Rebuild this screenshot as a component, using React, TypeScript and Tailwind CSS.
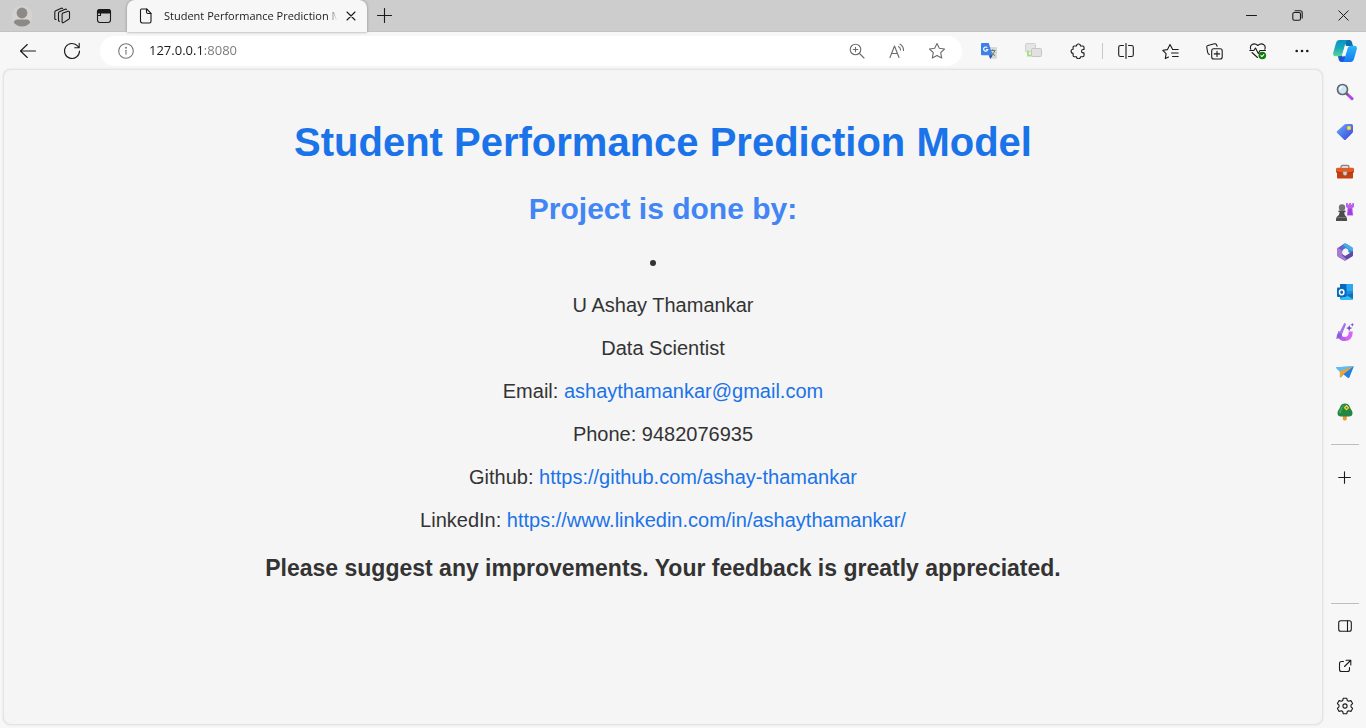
import React from 'react';

type IconProps = { children: React.ReactNode; size?: number; className?: string; stroke?: string };

function Line({ children, size = 18, className = '', stroke = '#1b1b1b' }: IconProps) {
  return (
    <svg
      width={size}
      height={size}
      viewBox={`0 0 ${size} ${size}`}
      fill="none"
      stroke={stroke}
      strokeWidth="1.1"
      strokeLinecap="round"
      strokeLinejoin="round"
      className={`shrink-0 ${className}`}
      aria-hidden="true"
    >
      {children}
    </svg>
  );
}

function IconButton({ label, className, children }: { label: string; className: string; children: React.ReactNode }) {
  return (
    <button type="button" aria-label={label} className={`flex shrink-0 items-center justify-center ${className}`}>
      {children}
    </button>
  );
}

function TabStrip() {
  return (
    <header className="flex h-8 items-stretch border-b border-[#c3c3c3] bg-[#cdcdcd]">
      <IconButton label="Profile" className="ml-0.5 w-10">
        <svg width="22" height="22" viewBox="0 0 22 22" aria-hidden="true">
          <circle cx="11" cy="11" r="10.5" fill="#d5d3d0" />
          <circle cx="11" cy="8" r="5.4" fill="#8d8986" />
          <path d="M2.800 17.800c.4-2.300 1.600-3.300 3.600-3.300h9.200c2 0 3.200 1 3.600 3.300-2 2.300-4.900 3.700-8.200 3.700s-6.200-1.400-8.200-3.700z" fill="#8d8986" />
        </svg>
      </IconButton>
      <IconButton label="Workspaces" className="w-10">
        <Line>
          <path d="M9.500 6.300 15 4.300q1.500-.4 1.500 1v5.800q0 .8-.8 1.200l-5.200 3.300q-1.400.7-1.400-.8V7.500q0-.9.400-1.200z" />
          <path d="M6.500 14.200q-1 .1-1-1V6.200q0-1 .9-1.400L12.200 2.200q1-.3 1.300.4" />
          <path d="M3 12.500q-1.200.1-1.200-1V5.200q0-1 .9-1.400L8.300 1.200q1-.3 1.300.4" />
        </Line>
      </IconButton>
      <IconButton label="Tab actions" className="w-11">
        <Line size={16}>
          <rect x="1.500" y="1.500" width="13" height="13" rx="2.500" />
          <path d="M1.500 4q0-2.500 2.500-2.500h8q2.500 0 2.500 2.500v1h-13z" fill="#1b1b1b" />
          <path d="M4.500 5v2.500h-3" />
        </Line>
      </IconButton>
      <div className="-mb-px ml-px flex w-60 items-center rounded-t-lg bg-[#f7f7f7] pr-2 pl-[11px] shadow-[0_0_3px_#888888]">
        <Line size={16}>
          <path d="M3.500 1h5.200l4.300 4.300v8.200q0 1.500-1.500 1.500h-7Q3 15 2.500 13.500v-11Q2.500 1 3.500 1z" />
          <path d="M8.500 1v3q0 1.500 1.500 1.500h3" />
        </Line>
        <span className="ml-2.5 min-w-0 flex-1 overflow-hidden mask-r-from-95% font-['Open_Sans',sans-serif] text-[11px] whitespace-nowrap text-[#1b1b1b]">
          Student Performance Prediction Model
        </span>
        <IconButton label="Close tab" className="ml-1.5 size-4">
          <Line size={10}>
            <path d="m1 1 8 8M9 1 1 9" />
          </Line>
        </IconButton>
      </div>
      <IconButton label="New tab" className="w-[35px]">
        <Line size={15}>
          <path d="M7.500.5v14M.5 7.500h14" />
        </Line>
      </IconButton>
      <div className="flex-1" />
      <IconButton label="Minimize" className="w-[46px]">
        <Line size={11}>
          <path d="M.5 5.500h10" strokeWidth="1" />
        </Line>
      </IconButton>
      <IconButton label="Restore" className="w-[46px]">
        <Line size={11}>
          <rect x=".8" y="2.500" width="7.700" height="7.700" rx="1.500" />
          <path d="M3 .8h5.200q2 0 2 2V8" />
        </Line>
      </IconButton>
      <IconButton label="Close window" className="w-[46px]">
        <Line size={11}>
          <path d="m.8.8 9.400 9.400M10.200.8.8 10.200" strokeWidth="1" />
        </Line>
      </IconButton>
    </header>
  );
}

function AddressBar() {
  return (
    <div className="ml-1.5 flex h-[30px] min-w-0 flex-1 items-center rounded-full bg-white pr-[5px] pl-[18px]">
      <Line size={16} stroke="#767676">
        <circle cx="8" cy="8" r="7.300" />
        <path d="M8 7.300v4" />
        <circle cx="8" cy="4.700" r=".4" fill="#767676" />
      </Line>
      <input
        type="text"
        aria-label="Address"
        defaultValue="127.0.0.1:8080"
        className="ml-[15px] min-w-0 flex-1 bg-linear-to-r from-[#1b1b1b] from-[54px] to-[#767676] to-[54px] bg-clip-text font-['Open_Sans',sans-serif] text-[13px] text-transparent caret-black outline-none"
      />
      <IconButton label="Zoom" className="w-10">
        <Line size={16} stroke="#6b6b6b">
          <circle cx="6.500" cy="6.500" r="5.300" />
          <path d="m10.500 10.500 4.500 4.500M6.500 4.200v4.600M4.200 6.500h4.600" />
        </Line>
      </IconButton>
      <IconButton label="Read aloud" className="w-10">
        <Line size={16} stroke="#6b6b6b">
          <path d="M1 14.500 5.500 3l4.500 11.500M2.600 10.500h5.800" />
          <path d="M9.500 3.500q2 1.200 2 3.500M11 1.200q3.800 2.200 3.500 6.300" />
        </Line>
      </IconButton>
      <IconButton label="Favorite" className="w-10">
        <Line stroke="#6b6b6b">
          <path d="m9 1.500 2.300 4.800 5.200.7-3.800 3.700 1 5.300L9 13.500 4.300 16l1-5.300L1.500 7l5.200-.7z" />
        </Line>
      </IconButton>
    </div>
  );
}

function Toolbar() {
  return (
    <nav aria-label="Browser toolbar" className="flex items-center pt-1 pb-[3px] pl-1.5">
      <IconButton label="Back" className="h-[30px] w-11">
        <Line>
          <path d="M16.500 9h-15M8.300 2.500 1.500 9l6.800 6.500" />
        </Line>
      </IconButton>
      <IconButton label="Refresh" className="h-[30px] w-11">
        <Line>
          <path d="M16.500 9A7.500 7.500 0 1 1 14.800 4.200L16 5.500M16.200 1.200v4.500h-4.500" />
        </Line>
      </IconButton>
      <AddressBar />
      <IconButton label="Translate" className="ml-[5px] h-[30px] w-11">
        <svg width="16" height="16" viewBox="0 0 16 16" aria-hidden="true">
          <path d="M6 4h9.200q.8 0 .8.800V15q0 .8-.8.800H9z" fill="#d8d8d8" />
          <path d="M9 7.500h5.500M11.700 6.300v1.200M13.800 7.500c-.6 2.300-2 4-4 5.200M10 8.500c.9 1.800 2.200 3.200 4 4.200" stroke="#607d78" fill="none" />
          <path d="M1 0h6.800l3.500 12.200H1q-1 0-1-1V1q0-1 1-1z" fill="#3d80e8" />
          <path d="m7.800 12.200 1.500 3.800 2.500-3.800z" fill="#234fac" />
          <path d="M6.300 4.700A2.100 2.100 0 1 0 6.800 6.500H4.900" stroke="#fff" strokeWidth="1.200" fill="none" />
        </svg>
      </IconButton>
      <IconButton label="Tab screens" className="h-[30px] w-[45px]">
        <svg width="17" height="16" viewBox="0 0 17 16" aria-hidden="true">
          <rect x=".5" y=".5" width="10" height="8.500" rx="1.200" fill="#e5e5e5" stroke="#cfcfcf" />
          <path d="M3 7.500v5h3.500" stroke="#9be572" strokeWidth="1.800" fill="none" />
          <rect x="6.500" y="5.500" width="10" height="8" rx="1" fill="#e1e1e1" stroke="#c5c5c5" />
        </svg>
      </IconButton>
      <IconButton label="Extensions" className="h-[30px] w-11">
        <Line size={16}>
          <path d="M4.300 3h2.200a2 2 0 0 1 4 0h2.300q1.200 0 1.200 1.200v2.300h-.8a1.700 1.700 0 0 0 0 3.400h.8v2.600q0 1.200-1.200 1.200h-2.300a2 2 0 0 1-4 0H4.300q-1.200 0-1.200-1.200v-2.300a2 2 0 0 1 0-4V4.200Q3.100 3 4.300 3z" />
        </Line>
      </IconButton>
      <span className="flex h-4 w-1 justify-center">
        <span className="w-px bg-[#c8c8c8]" />
      </span>
      <IconButton label="Split screen" className="h-[30px] w-11">
        <Line size={16}>
          <path d="M5.500 2.500h-3Q.7 2.500.7 4.300v7.400q0 1.800 1.800 1.800h3M10.500 2.500h3q1.800 0 1.800 1.800v7.400q0 1.800-1.800 1.800h-3M8 .5v15" />
        </Line>
      </IconButton>
      <IconButton label="Favorites" className="h-[30px] w-11">
        <Line size={17}>
          <path d="m6.500 14-3.200 1.600.8-4.900L.8 7.300l4.700-.7L8 1.500l2.300 4.300M10.500 6.500h5.700M9.500 10h6.700M10.500 13.500h5.700" />
        </Line>
      </IconButton>
      <IconButton label="Collections" className="h-[30px] w-11">
        <Line size={17}>
          <rect x="5.700" y="5.700" width="10.500" height="10.300" rx="2" />
          <path d="M11 8.200v5.300M8.300 10.900h5.300M3.500 11.500Q2 11.300 1.700 9.500L.8 4.500q-.3-1.600 1.200-2L8.500.8q1.500-.3 2 1l.6 1.500" />
        </Line>
      </IconButton>
      <IconButton label="Browser essentials" className="h-[30px] w-11">
        <Line>
          <path d="M1.800 7.200C.2 3.500 4.500-.2 8.800 3.500c4.300-3.700 8.600 0 7 3.700M3 10.500l5.500 5M.8 8.500h4L6.500 6l2.800 5.500L11 8.500h5.500" />
          <circle cx="13.300" cy="13.500" r="3.800" fill="#107c10" stroke="none" />
          <path d="m11.900 13.600 1 1 1.900-2" stroke="#fff" />
        </Line>
      </IconButton>
      <IconButton label="Settings and more" className="h-[30px] w-11">
        <svg width="14" height="4" viewBox="0 0 14 4" fill="#1b1b1b" aria-hidden="true">
          <circle cx="1.700" cy="2" r="1.300" />
          <circle cx="7" cy="2" r="1.300" />
          <circle cx="12.300" cy="2" r="1.300" />
        </svg>
      </IconButton>
      <IconButton label="Copilot" className="h-[30px] w-[42px]">
        <svg width="24" height="22" viewBox="0 0 24 22" aria-hidden="true">
          <defs>
            <linearGradient id="cp-left" x1="0" y1="0" x2="0" y2="1">
              <stop stopColor="#0a93c4" />
              <stop offset=".5" stopColor="#18a9bd" />
              <stop offset="1" stopColor="#5ad88e" />
            </linearGradient>
            <linearGradient id="cp-right" x1="0" y1="0" x2="0" y2="1">
              <stop stopColor="#2bb9f5" />
              <stop offset="1" stopColor="#1478f5" />
            </linearGradient>
          </defs>
          <path d="M11 0h5.500q1.800 0 2.400 2l1.100 4h-7z" fill="#0b6fae" />
          <path d="M13 22H8.500q-2 0-2.600-2L4.700 15.500H12z" fill="#1855d8" />
          <path d="M6.500 0H15q-1.800.5-2.500 3l-3 10.500q-.8 2.800-3.500 2.800H2.500Q-.5 16.300.3 12.500L3 3q.9-3 3.500-3z" fill="url(#cp-left)" />
          <path d="M17.500 22H9q1.800-.5 2.500-3l3-10.500q.8-2.800 3.500-2.800h3.500q3 0 2.200 3.800L21 19q-.9 3-3.500 3z" fill="url(#cp-right)" />
          <path d="m12.200 6 2.800-.1-3.200 10.400-2.800.1z" fill="#f7f7f7" />
        </svg>
      </IconButton>
    </nav>
  );
}

function Art({ children }: { children: React.ReactNode }) {
  return (
    <svg width="18" height="18" viewBox="0 0 18 18" aria-hidden="true">
      {children}
    </svg>
  );
}

function Sidebar() {
  return (
    <aside aria-label="Sidebar" className="flex w-[43px] shrink-0 flex-col items-center pt-[3px]">
      <IconButton label="Search" className="h-10 w-10">
        <Art>
          <path d="m11 11 5 4.700" stroke="#b246ee" strokeWidth="3" strokeLinecap="round" />
          <path d="m10 10 2 2" stroke="#666" strokeWidth="2" />
          <circle cx="6.500" cy="6.500" r="5" fill="#cce9fc" stroke="#666" strokeWidth="1.700" />
          <path d="M3.700 6.500q.2-2.600 2.800-3" stroke="#fff" strokeWidth="1.200" fill="none" />
        </Art>
      </IconButton>
      <IconButton label="Shopping" className="h-10 w-10">
        <svg width="18" height="18" viewBox="0 0 18 18" aria-hidden="true">
          <defs>
            <linearGradient id="tag" x1="0" y1="0" x2="1" y2="1">
              <stop stopColor="#66b0ff" />
              <stop offset="1" stopColor="#393fd8" />
            </linearGradient>
          </defs>
          <path d="M8.500 1.500q.7-.6 1.500-.6l5.500.2q1.500.1 1.500 1.600v5.800q0 .8-.6 1.400l-6.500 6.700q-1 1-2 0L1.200 10q-1-1 0-2z" fill="url(#tag)" />
          <circle cx="13" cy="5" r="1.500" fill="#fff" stroke="#f4c430" strokeWidth="1.500" />
        </svg>
      </IconButton>
      <IconButton label="Tools" className="h-10 w-10">
        <Art>
          <path d="M5 5V4q0-1.500 1.500-1.500h5Q13 2.500 13 4v1" stroke="#858585" strokeWidth="1.300" fill="none" />
          <path d="M1 14.800V9h16v5.800q0 .8-.8.800H1.800q-.8 0-.8-.800z" fill="#c6400f" />
          <path d="M0 6Q0 4.800 1.500 4.800h15Q18 4.800 18 6v3q-3 1.200-9 1.200T0 9z" fill="#e35b25" />
          <path d="M0 8.800Q3 10 9 10t9-1.200" stroke="#a9300c" fill="none" />
          <path d="M7 8.500h4v2.200Q11 12.500 9 12.500t-2-1.800z" fill="#d2d2d2" stroke="#888" strokeWidth=".6" />
        </Art>
      </IconButton>
      <IconButton label="Games" className="h-10 w-10">
        <Art>
          <path d="M10 0h1.800v1.500h1.400V0h1.800v1.500h1.300V0H18v4l-1.600 1 .7 7.500H11L11.600 5 10 4z" fill="#bb61ef" />
          <path d="M12.500 5.500h3l.8 6.500h-4.600z" fill="#a23ee0" />
          <circle cx="6" cy="4.500" r="3.200" fill="#747474" />
          <path d="M2.500 7.500h7v1.800H8.200q0 3 2.300 4.700l.5 2v2H0v-2l.7-2Q3.500 12.300 3.800 9.300H2.500z" fill="#4c4c4c" />
          <path d="M1.500 14.500h8.500" stroke="#777" />
        </Art>
      </IconButton>
      <IconButton label="Microsoft 365" className="h-10 w-10">
        <Art>
          <path d="M1 5.500 8 .8q1-.6 2.300.1l3.200 1.900-6 3.700v6L4 14.800 2 13.500q-1-.7-1-2z" fill="#725bc1" />
          <path d="M7 1.500 8.500.7q1-.4 2 .2L16 4.300q1 .7 1 2v5.200L12.300 9V6.800L9.500 5 6 6z" fill="#3984df" />
          <path d="M7 1.500 11 5l6 4V6.300q0-1.300-1-2L10.500.9q-1-.6-2 0z" fill="#48b0e8" />
          <path d="M17 8v4.200q0 .8-.8 1.400L10 17.300q-1 .6-2 0L2.800 14l5-2.500L9 13l3.300-2z" fill="#5d4ba9" />
          <path d="M1.500 4.500 6 7.500v4.500l5 4.700-1 .6q-1 .6-2 0L2 13.700q-1-.7-1-2V6z" fill="#a77bcf" />
          <path d="m8.700 5.800 2.800 1.300.8 2.400-1.600 2.500-2.800.2L6 10.200l.6-2.800z" fill="#f7f7f7" />
        </Art>
      </IconButton>
      <IconButton label="Outlook" className="h-10 w-10">
        <Art>
          <rect x="4" y="1" width="13" height="15.500" rx="1.200" fill="#1490df" />
          <path d="M4 1h6.500v7H4z" fill="#0a67bb" />
          <path d="M10.500 1H16q1 0 1 1v6h-6.500z" fill="#2ba8ef" />
          <path d="M17 9v7q0 1-1 1H5l-.5-1.500z" fill="#36bdf5" />
          <path d="m10 12 7 4V9.500z" fill="#0d71bb" />
          <rect x="1" y="4.500" width="9.500" height="9.500" rx="1" fill="#0769be" />
          <ellipse cx="5.700" cy="9.300" rx="2.200" ry="2.500" stroke="#fff" strokeWidth="1.500" fill="none" />
        </Art>
      </IconButton>
      <IconButton label="Image Creator" className="h-10 w-10">
        <Art>
          <path d="M4 8.500q-1.500 7.300 4.500 7.500 6.200 0 6.300-7.500" stroke="#d963f3" strokeWidth="4" fill="none" />
          <path d="M3.500 13q1.500 3.500 6 3" stroke="#b45ff0" strokeWidth="3.200" fill="none" />
          <path d="m8.300 0 1.900.9-4.700 11.600-3-1.200z" fill="#a377e8" />
          <path d="M2.500 10q3-.3 3.300 2 .2 2.500-2.300 3.300L0 15.700q.8-1 .8-3Q1 10.600 2.500 10z" fill="#8760df" />
          <path d="m13.200 2 .9 2.200 2.200.9-2.200.9-.9 2.200-.9-2.200-2.200-.9 2.200-.9zM16.300-.2l.5 1.400 1.400.6-1.400.5-.5 1.400-.6-1.400-1.400-.5 1.400-.6z" fill="#7445d0" />
        </Art>
      </IconButton>
      <IconButton label="Drop" className="h-10 w-10">
        <Art>
          <path d="m0 4.300 17-1q1-.1.600.8l-4.300 10.300q-.3.900-1.200.5L7.500 11.500l-2.800 3.300L4 9z" fill="#39a6f1" />
          <path d="m0 4.300 17-1L4.500 8.500Q2 7.500.5 5.500z" fill="#5dbcf6" />
          <path d="M17.500 3.500 7.500 11l5 3.900q.6 0 .9-.8z" fill="#2380dd" />
          <path d="M17 3.500 3.800 8.300v5.800q0 .8.600.2l3.200-3.400z" fill="#f2a52b" />
        </Art>
      </IconButton>
      <IconButton label="E-tree" className="h-10 w-10">
        <Art>
          <path d="M6.800 11h4v5q-.2 1.500-2 1.500t-2-1.500z" fill="#ef982d" />
          <path d="M9 .5Q5.500.5 4.200 3.800Q3.700 5.500 2.500 7 1.500 8.500 1.500 10.300 1.800 13.500 5 13.500h8q3.300 0 3.500-3.200 0-1.800-1-3.300-1.200-1.500-1.700-3.200Q12.500.5 9 .5z" fill="#248642" />
          <path d="M3 9.500q.3-1.500 1.500-3Q5.500 2.500 8.500 2q-3 3-3.500 8.500z" fill="#46ad50" />
          <path d="m10.500 1.800 2.800 2.900-2.800 2.800-2.800-2.800z" fill="#f9d842" />
          <circle cx="10.500" cy="4.700" r=".9" fill="#2d8642" />
        </Art>
      </IconButton>
      <hr className="mt-3 w-7 border-[#bdbdbd]" />
      <IconButton label="Customize sidebar" className="mt-3 h-10 w-10">
        <Line size={13}>
          <path d="M6.500.7v11.600M.7 6.500h11.600" />
        </Line>
      </IconButton>
      <div className="flex-1" />
      <hr className="w-7 border-[#bdbdbd]" />
      <IconButton label="Hide sidebar" className="mt-0.5 h-10 w-10">
        <Line size={14}>
          <rect x=".7" y="1.700" width="12.600" height="10.600" rx="2" />
          <path d="M9.500 1.700v10.600" />
        </Line>
      </IconButton>
      <IconButton label="Open in new window" className="h-10 w-10">
        <Line size={14}>
          <path d="M5.500 2.500H3.500q-2 0-2 2v6q0 2 2 2h6q2 0 2-2v-2M8 1.200h4.800V6M12.500 1.500l-6 6" />
        </Line>
      </IconButton>
      <IconButton label="Settings" className="mb-0.5 h-10 w-10">
        <Line>
          <circle cx="9" cy="9" r="2.100" />
          <path d="M7.300 1.200h3.400l.6 2.300 1.300.8 2.300-.7 1.700 3L15 8.200v1.600l1.600 1.600-1.700 3-2.300-.7-1.300.8-.6 2.300H7.300l-.6-2.300-1.300-.8-2.300.7-1.700-3L3 9.800V8.200L1.400 6.600l1.700-3 2.300.7 1.300-.8z" />
        </Line>
      </IconButton>
    </aside>
  );
}

const details: { label?: string; value: string; href?: string }[] = [
  { value: 'U Ashay Thamankar' },
  { value: 'Data Scientist' },
  { label: 'Email: ', value: 'ashaythamankar@gmail.com', href: 'mailto:ashaythamankar@gmail.com' },
  { label: 'Phone: ', value: '9482076935' },
  { label: 'Github: ', value: 'https://github.com/ashay-thamankar', href: 'https://github.com/ashay-thamankar' },
  {
    label: 'LinkedIn: ',
    value: 'https://www.linkedin.com/in/ashaythamankar/',
    href: 'https://www.linkedin.com/in/ashaythamankar/',
  },
];

function Page() {
  return (
    <main className="mb-[3px] ml-[3px] min-w-0 flex-1 rounded-lg border border-[#e4e4e4] bg-[#f5f5f5] px-6 pt-12 pb-6 text-center font-['Liberation_Sans',Arial,sans-serif] text-[20px] leading-[23px] text-[#333333] shadow-[0_0_2px_#d8d8d8]">
      <h1 className="text-[40px] leading-[48px] font-bold text-[#1a73e8]">Student Performance Prediction Model</h1>
      <h2 className="mt-[25px] text-[30px] leading-9 font-bold text-[#4285f4]">Project is done by:</h2>
      <ul className="mt-6 list-inside list-disc">
        <li>
          {details.map((d) => (
            <p key={d.value} className="mt-5">
              {d.label}
              {d.href ? (
                <a href={d.href} className="text-[#1a73e8]">
                  {d.value}
                </a>
              ) : (
                d.value
              )}
            </p>
          ))}
        </li>
      </ul>
      <h3 className="mt-[23px] text-[23px] leading-[26px] font-bold">
        Please suggest any improvements. Your feedback is greatly appreciated.
      </h3>
    </main>
  );
}

export default function App() {
  return (
    <div className="flex min-h-screen flex-col bg-[#f7f7f7]">
      <TabStrip />
      <Toolbar />
      <div className="flex flex-1">
        <Page />
        <Sidebar />
      </div>
    </div>
  );
}
